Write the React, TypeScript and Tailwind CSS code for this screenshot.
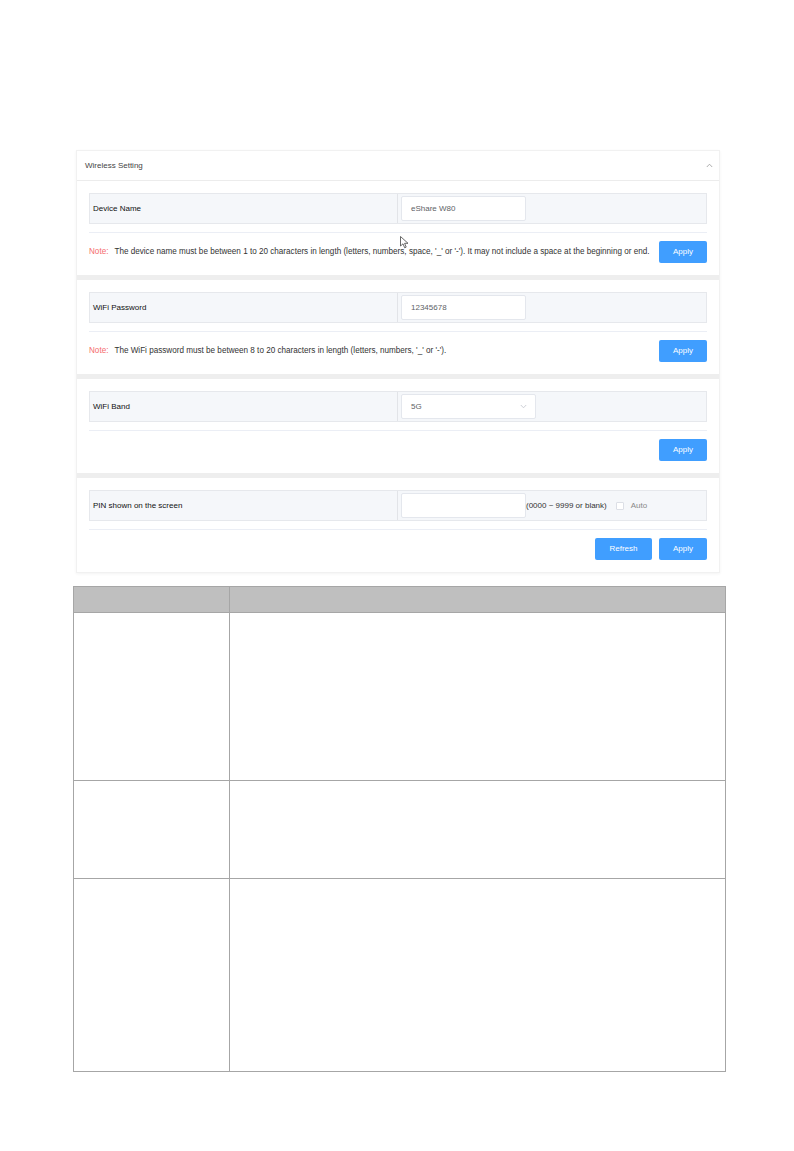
import type { ReactNode } from 'react';

const FONT = { fontFamily: '"Liberation Sans", Arial, sans-serif' };

function ApplyButton({ label = 'Apply' }: { label?: string }) {
  return (
    <button className="flex h-[22px] w-[48px] items-center justify-center rounded-[2px] bg-[#409eff] text-[8px] text-white">
      {label}
    </button>
  );
}

function FieldRow({ label, children }: { label: string; children: ReactNode }) {
  return (
    <div className="flex h-[31px] border border-[#e6e8ec] bg-[#f5f7fa]">
      <div className="flex w-[308px] items-center border-r border-[#e2e4e8] pl-[3px] text-[8px] text-[#111]">
        {label}
      </div>
      <div className="flex flex-1 items-center pl-[3px]">{children}</div>
    </div>
  );
}

function Section({
  label,
  field,
  note,
  actions,
  last,
}: {
  label: string;
  field: ReactNode;
  note?: ReactNode;
  actions: ReactNode;
  last?: boolean;
}) {
  return (
    <div className={`px-[12px] pt-3 pb-3 ${last ? '' : 'border-b-[5px] border-[#eeeeee]'}`}>
      <FieldRow label={label}>{field}</FieldRow>
      <div className="mt-2 h-px bg-[#ebeef5]" />
      <div className="flex items-center justify-between pt-2">
        <div className="text-[8.15px] text-[#333]">{note}</div>
        <div className="flex gap-[7px]">{actions}</div>
      </div>
    </div>
  );
}

function Note({ children }: { children: ReactNode }) {
  return (
    <span>
      <span className="text-[#f56c6c]">Note:</span>
      <span className="ml-[6px]">{children}</span>
    </span>
  );
}

function TextInput({ value }: { value: string }) {
  return (
    <div className="flex h-[25px] w-[125px] items-center rounded-[2px] border border-[#e4e7ed] bg-white pl-[9px] text-[8px] text-[#606266]">
      {value}
    </div>
  );
}

function Cursor() {
  return (
    <svg className="absolute left-[400px] top-[236px]" width="9" height="13" viewBox="0 0 9 13">
      <path d="M0.5 0.5 L0.5 10 L3 7.8 L4.7 11.8 L6.2 11.1 L4.6 7.3 L8 7.3 Z" fill="white" stroke="#444" strokeWidth="0.8" strokeLinejoin="round" />
    </svg>
  );
}

export default function App() {
  return (
    <div className="relative min-h-[1151px] w-[794px] bg-white" style={FONT}>
      <div className="pt-[150px] pl-[76px]">
        <div className="w-[644px] border border-[#f1f1f1] shadow-[0_1px_3px_rgba(0,0,0,0.05)]">
          <div className="flex h-[30px] items-center justify-between border-b border-[#ececec] pl-[8px] pr-[6px]">
            <span className="text-[8px] text-[#444]">Wireless Setting</span>
            <svg width="7" height="5" viewBox="0 0 7 5">
              <path d="M0.8 4 L3.5 1.2 L6.2 4" fill="none" stroke="#999" strokeWidth="0.8" />
            </svg>
          </div>

          <Section
            label="Device Name"
            field={<TextInput value="eShare W80" />}
            note={
              <Note>
                The device name must be between 1 to 20 characters in length (letters, numbers, space, '_' or '-'). It may
                not include a space at the beginning or end.
              </Note>
            }
            actions={<ApplyButton />}
          />

          <Section
            label="WiFi Password"
            field={<TextInput value="12345678" />}
            note={<Note>The WiFi password must be between 8 to 20 characters in length (letters, numbers, '_' or '-').</Note>}
            actions={<ApplyButton />}
          />

          <Section
            label="WiFi Band"
            field={
              <div className="flex h-[25px] w-[135px] items-center justify-between rounded-[2px] border border-[#e4e7ed] bg-white pl-[9px] pr-[8px] text-[8px] text-[#606266]">
                5G
                <svg width="7" height="5" viewBox="0 0 7 5">
                  <path d="M0.8 1 L3.5 3.8 L6.2 1" fill="none" stroke="#c0c4cc" strokeWidth="0.8" />
                </svg>
              </div>
            }
            actions={<ApplyButton />}
          />

          <Section
            label="PIN shown on the screen"
            field={
              <div className="flex items-center text-[8px]">
                <div className="h-[25px] w-[125px] rounded-[2px] border border-[#e4e7ed] bg-white" />
                <span className="text-[#333]">(0000 ~ 9999 or blank)</span>
                <span className="ml-[9px] h-[8px] w-[8px] rounded-[1px] border border-[#dcdfe6] bg-white" />
                <span className="ml-[7px] text-[#888]">Auto</span>
              </div>
            }
            actions={
              <>
                <button className="flex h-[22px] w-[57px] items-center justify-center rounded-[2px] bg-[#409eff] text-[8px] text-white">
                  Refresh
                </button>
                <ApplyButton />
              </>
            }
            last
          />
        </div>
      </div>

      <div className="mt-[13px] ml-[73px] w-[653px] border border-[#a6a6a6]">
        <div className="grid h-[26px] grid-cols-[156px_1fr] border-b border-[#a6a6a6] bg-[#bfbfbf]">
          <div className="border-r border-[#a6a6a6]" />
          <div />
        </div>
        <div className="grid h-[168px] grid-cols-[156px_1fr] border-b border-[#a6a6a6]">
          <div className="border-r border-[#a6a6a6]" />
          <div />
        </div>
        <div className="grid h-[98px] grid-cols-[156px_1fr] border-b border-[#a6a6a6]">
          <div className="border-r border-[#a6a6a6]" />
          <div />
        </div>
        <div className="grid h-[192px] grid-cols-[156px_1fr]">
          <div className="border-r border-[#a6a6a6]" />
          <div />
        </div>
      </div>

      <Cursor />
    </div>
  );
}
